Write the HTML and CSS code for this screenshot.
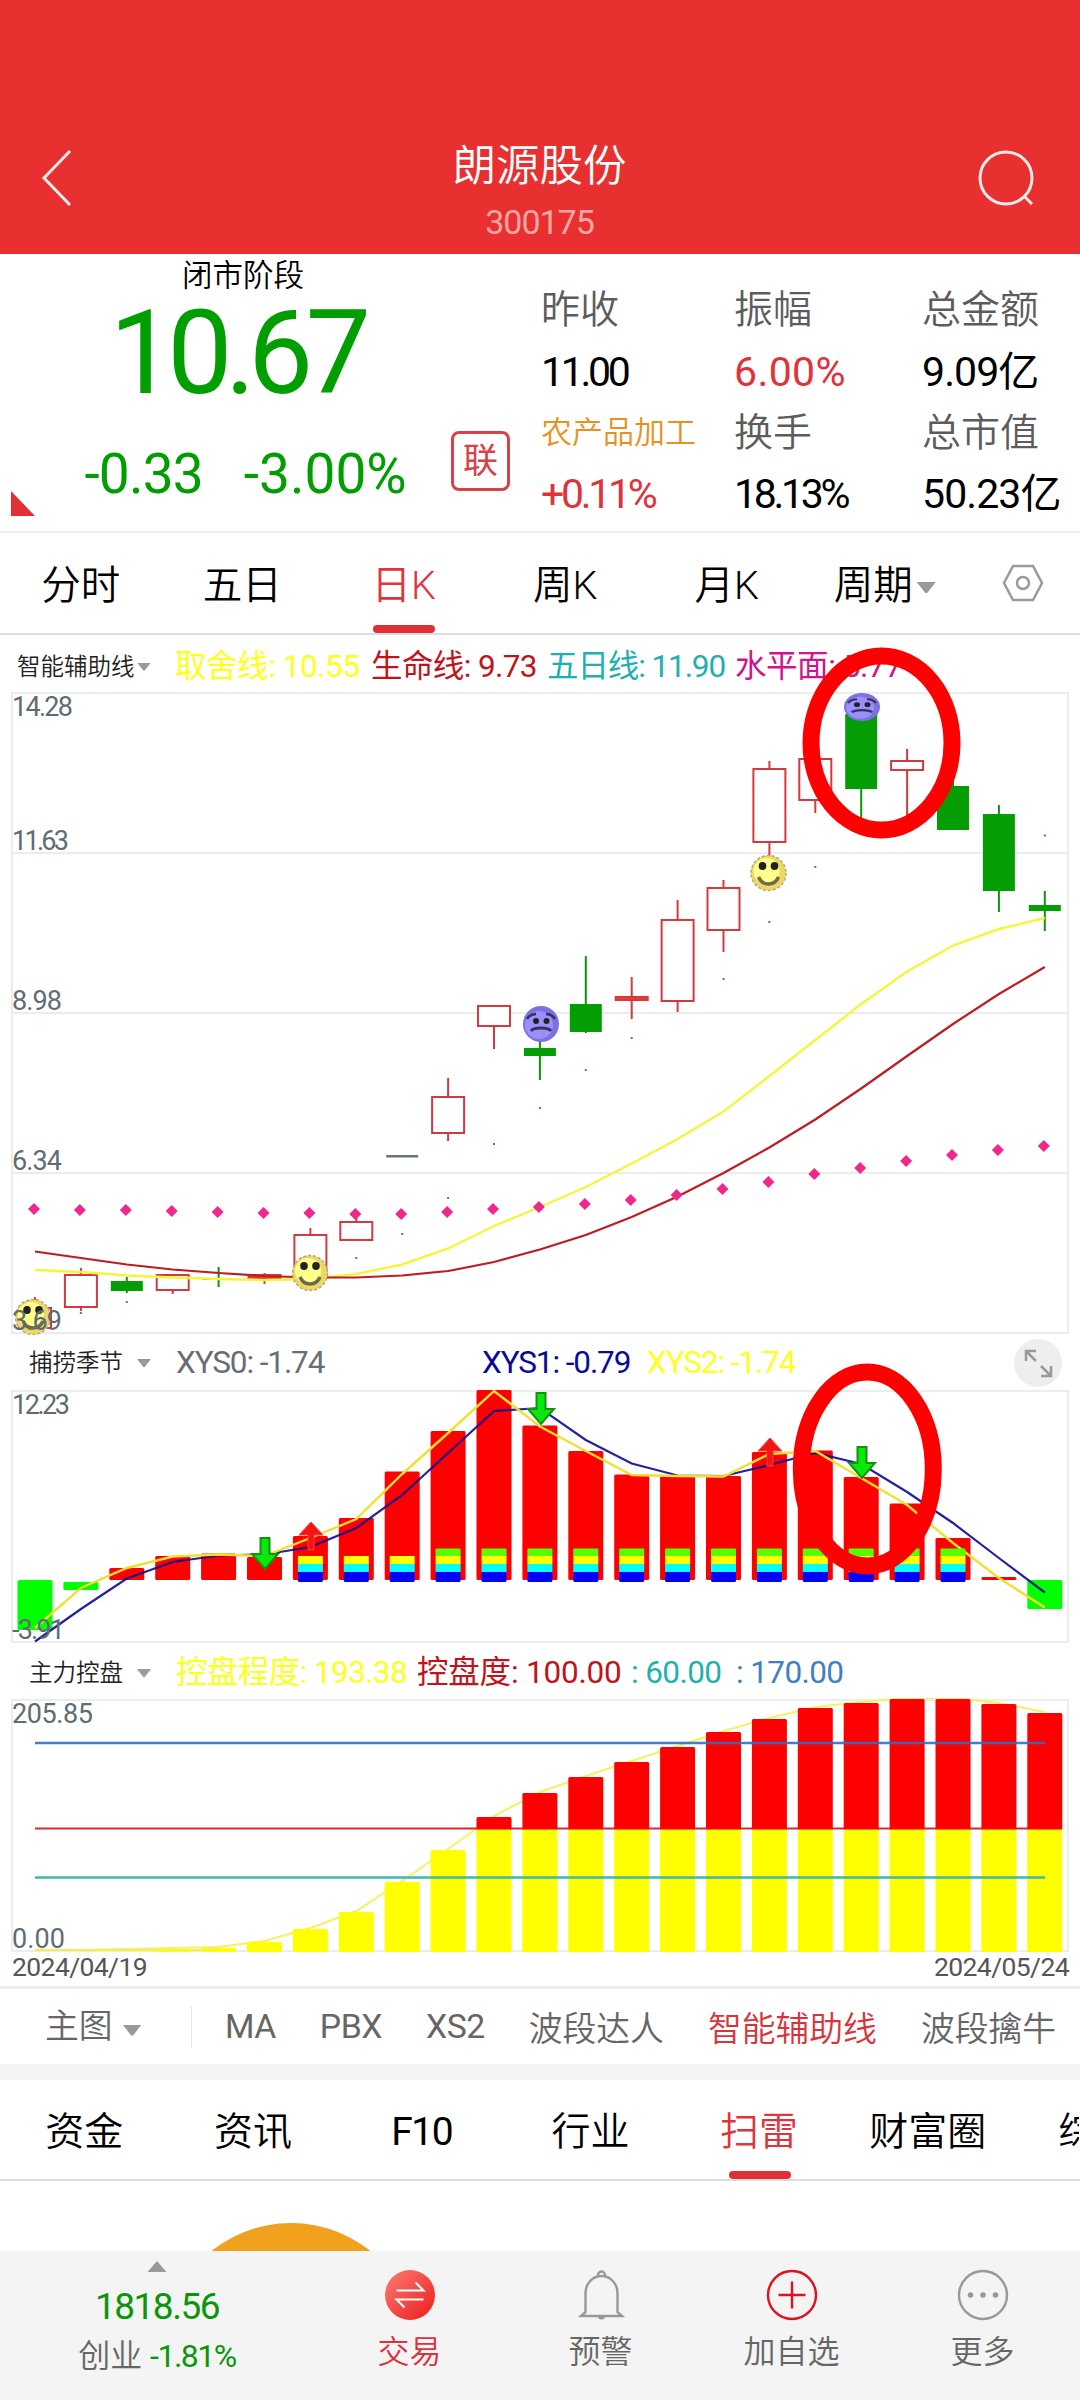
FILE: index.html
```
<!DOCTYPE html>
<html lang="zh-CN">
<head>
    <meta charset="UTF-8">
    <meta name="viewport" content="width=device-width, initial-scale=1.0">
    <title>朗源股份 300175</title>
    <link rel="stylesheet" href="styles.css">
</head>
<body>

<header class="topbar">
    <svg class="back-icon" viewBox="0 0 32 60" width="32" height="60"><path d="M29 3 L3 30 L29 57"/></svg>
    <div class="stock-title">
        <h1>朗源股份</h1>
        <p>300175</p>
    </div>
    <svg class="search-icon" viewBox="0 0 60 60" width="60" height="60"><circle cx="29" cy="30" r="26"/><path d="M47 48 L55 56"/></svg>
</header>

<section class="quote">
    <div class="price-box">
        <div class="stage">闭市阶段</div>
        <div class="price">10.67</div>
        <div class="change"><span>-0.33</span><span class="change-rate">-3.00%</span></div>
    </div>
    <div class="tag-box"><span class="tag">联</span></div>
    <div class="stats">
        <span class="label">昨收</span><span class="label">振幅</span><span class="label">总金额</span>
        <span class="value tight">11.00</span><span class="value red loose">6.00%</span><span class="value">9.09亿</span>
        <span class="label industry">农产品加工</span><span class="label">换手</span><span class="label">总市值</span>
        <span class="value red tight">+0.11%</span><span class="value tight">18.13%</span><span class="value">50.23亿</span>
    </div>
    <svg class="corner" viewBox="0 0 24 25" width="24" height="25"><path d="M0 0 V25 H24 Z"/></svg>
</section>

<nav class="period-tabs">
    <span>分时</span>
    <span>五日</span>
    <span class="active">日K</span>
    <span>周K</span>
    <span>月K</span>
    <span class="more">周期<i class="caret"></i></span>
    <svg class="setting-icon" viewBox="0 0 42 38" width="42" height="38"><path d="M11 2 H31 L40 19 L31 36 H11 L2 19 Z"/><circle cx="21" cy="19" r="6"/></svg>
</nav>

<section class="charts">
    <div class="indicator-bar main-bar">
        <span class="indicator-name">智能辅助线<i class="caret small"></i></span>
        <span class="yellow w-a">取舍线: 10.55</span>
        <span class="darkred w-b">生命线: 9.73</span>
        <span class="teal w-c">五日线: 11.90</span>
        <span class="magenta">水平面: 5.77</span>
    </div>
    <svg id="main-chart" class="chart" viewBox="0 690 1080 645" width="1080" height="645"></svg>

    <div class="indicator-bar">
        <span class="indicator-name">捕捞季节<i class="caret small"></i></span>
        <span class="gray w-d">XYS0: -1.74</span>
        <span class="blue w-e">XYS1: -0.79</span>
        <span class="yellow w-f">XYS2: -1.74</span>
        <span class="expand"><svg viewBox="0 0 48 48" width="48" height="48"><path d="M22 22 L13 13 M12 22 V12 H22 M27 27 L36 36 M37 27 V37 H27"/></svg></span>
    </div>
    <svg id="season-chart" class="chart" viewBox="0 1389 1080 256" width="1080" height="256"></svg>

    <div class="indicator-bar control-bar">
        <span class="indicator-name">主力控盘<i class="caret small"></i></span>
        <span class="yellow w-g">控盘程度: 193.38</span>
        <span class="darkred w-h">控盘度: 100.00</span>
        <span class="teal w-i">: 60.00</span>
        <span class="steel">: 170.00</span>
    </div>
    <svg id="control-chart" class="chart" viewBox="0 1698 1080 256" width="1080" height="256"></svg>
    <div class="dates"><span>2024/04/19</span><span>2024/05/24</span></div>

    <!-- hand drawn marks over the charts -->
    <svg class="marks" viewBox="0 635 1080 960" width="1080" height="960">
        <ellipse cx="881.5" cy="743" rx="70.5" ry="87"/>
        <ellipse cx="867.3" cy="1469" rx="66" ry="97"/>
    </svg>
</section>

<nav class="indicator-tabs">
    <span class="main-select">主图<i class="caret"></i></span>
    <span class="latin">MA</span>
    <span class="latin">PBX</span>
    <span class="latin">XS2</span>
    <span>波段达人</span>
    <span class="active">智能辅助线</span>
    <span>波段擒牛</span>
</nav>

<nav class="info-tabs">
    <span>资金</span>
    <span>资讯</span>
    <span class="latin">F10</span>
    <span>行业</span>
    <span class="active">扫雷</span>
    <span>财富圈</span>
    <span class="cut">综合</span>
</nav>

<section class="content">
    <div class="gauge"></div>
</section>

<footer class="toolbar">
    <div class="index-box">
        <svg viewBox="0 0 20 12" width="20" height="12"><path d="M10 0 L19.500 11 H.5 Z"/></svg>
        <div class="index-value">1818.56</div>
        <div class="index-name">创业 <span>-1.81%</span></div>
    </div>
    <div class="tool active">
        <svg viewBox="0 0 52 52" width="52" height="52">
            <defs><linearGradient id="trade" x1="0" y1="0" x2="1" y2="1"><stop offset="0" stop-color="#fb7b76"/><stop offset="1" stop-color="#ec1c1c"/></linearGradient></defs>
            <circle cx="26" cy="26" r="25" fill="url(#trade)"/>
            <path d="M12.500 21.500 H39.500 L31.500 13.500 M39.500 30.500 H12.500 L20.500 38.500" fill="none" stroke="#fff" stroke-width="2"/>
        </svg>
        <span>交易</span>
    </div>
    <div class="tool">
        <svg class="line" viewBox="0 0 52 52" width="52" height="52"><path d="M6 47 L10.500 43 V24 A16 17 0 0 1 42.500 24 V43 L47 47 Z M23 8 V6 A3.500 3.500 0 0 1 30 6 V8 M24 48 A3 3 0 0 0 29 48"/></svg>
        <span>预警</span>
    </div>
    <div class="tool">
        <svg class="line add" viewBox="0 0 52 52" width="52" height="52"><circle cx="26" cy="26" r="24"/><path d="M26 12.500 V39.500 M12.500 26 H39.500"/></svg>
        <span>加自选</span>
    </div>
    <div class="tool">
        <svg class="line" viewBox="0 0 52 52" width="52" height="52"><circle cx="26" cy="26" r="24"/><g class="dots"><circle cx="13.500" cy="26" r="2.800"/><circle cx="26" cy="26" r="2.800"/><circle cx="38.500" cy="26" r="2.800"/></g></svg>
        <span>更多</span>
    </div>
</footer>

<script src="charts.js"></script>
</body>
</html>
```
FILE: styles.css
```
* {
    box-sizing: border-box;
}
body {
    margin: 0;
    width: 1080px;
    height: 2400px;
    overflow: hidden;
    background: #fff;
    color: #000;
    font-family: Roboto, "Noto Sans CJK SC", sans-serif;
    font-weight: 360;
    white-space: nowrap;
}
h1, p {
    margin: 0;
    font-weight: 360;
}
i {
    font-style: normal;
}
.latin {
    font-weight: 400;
}
.red {
    color: #e0323a;
}
.darkred {
    color: #c0141a;
}
.yellow {
    color: #ffff1e;
}
.teal {
    color: #1fb0b0;
}
.magenta {
    color: #d0148c;
}
.gray {
    color: #666e76;
}
.blue {
    color: #0a0a9a;
}
.steel {
    color: #3f80c4;
}

/* top bar */
.topbar {
    height: 254px;
    padding: 138px 43px 0 41px;
    background: #e93030;
    display: flex;
    justify-content: space-between;
}
.back-icon, .search-icon {
    margin-top: 10px;
    fill: none;
    stroke: #fff;
    stroke-width: 3;
    opacity: 0.9;
}
.stock-title {
    color: #fff;
    text-align: center;
    margin-left: 29px;
    padding-top: 2px;
}
.stock-title h1 {
    font-size: 43.500px;
    line-height: 54px;
}
.stock-title p {
    font-size: 34px;
    font-weight: 400;
    line-height: 57px;
    letter-spacing: -1px;
    color: #f8a6a4;
}

/* quote */
.quote {
    position: relative;
    height: 279px;
    border-bottom: 2px solid #ececec;
    display: flex;
}
.price-box {
    width: 451px;
    text-align: center;
    color: #009e00;
}
.stage {
    width: 486px;
    font-size: 30.500px;
    line-height: 44px;
    color: #000;
}
.price {
    width: 473px;
    font-size: 116px;
    font-weight: 400;
    line-height: 111px;
    letter-spacing: -7.500px;
}
.change {
    display: flex;
    justify-content: center;
    gap: 41px;
    padding-left: 40px;
    font-size: 55px;
    font-weight: 400;
    line-height: 130px;
    letter-spacing: -0.800px;
}
.change-rate {
    letter-spacing: 0;
}
.tag-box {
    width: 90px;
    padding-top: 177px;
}
.tag {
    display: block;
    width: 59px;
    height: 60px;
    border: 3px solid #d8404a;
    border-radius: 8px;
    font-size: 35px;
    font-weight: 400;
    line-height: 56px;
    text-align: center;
    color: #d8404a;
}
.stats {
    display: grid;
    grid-template-columns: 193px 188px 158px;
    grid-template-rows: 62px 61px 61px 62px;
    padding-top: 26px;
    align-content: start;
    line-height: 61px;
}
.label {
    font-size: 39px;
    color: #5c5c5c;
}
.industry {
    font-size: 31px;
    line-height: 59px;
    color: #ea9020;
}
.value {
    font-size: 41px;
    font-weight: 400;
    letter-spacing: -0.900px;
}
.value.tight {
    letter-spacing: -3.300px;
}
.value.loose {
    letter-spacing: 0.400px;
}
.corner {
    position: absolute;
    left: 11px;
    top: 237px;
    fill: #e03035;
}

/* period tabs */
.period-tabs {
    height: 102px;
    border-bottom: 2px solid #dcdfdf;
    display: flex;
    align-items: center;
    padding-right: 36px;
    font-size: 39.500px;
}
.period-tabs span {
    width: 161.500px;
    height: 100px;
    line-height: 105px;
    text-align: center;
}
.period-tabs .more {
    padding-right: 7px;
}
.active {
    color: #e0343c;
}
.period-tabs .active {
    position: relative;
}
.period-tabs .active::after, .info-tabs .active::after {
    content: "";
    position: absolute;
    left: 50%;
    bottom: 0;
    width: 62px;
    height: 8px;
    margin-left: -31px;
    border-radius: 4px;
    background: #e03035;
}
.info-tabs .active::after {
    margin-left: -30px;
}
.setting-icon {
    margin-left: 33px;
    fill: none;
    stroke: #9a9a9a;
    stroke-width: 2.500;
}
.caret {
    display: inline-block;
    width: 19px;
    height: 11px;
    margin-left: 4px;
    vertical-align: 6px;
    background: #999;
    clip-path: polygon(0 0, 100% 0, 55% 100%, 45% 100%);
}
.caret.small {
    width: 14px;
    height: 8px;
    margin-left: auto;
}

/* charts */
.charts {
    position: relative;
    height: 1354px;
    border-bottom: 3px solid #ececec;
}
.indicator-bar {
    height: 54px;
    padding-left: 29px;
    padding-top: 2px;
    display: flex;
    align-items: center;
    font-size: 31.500px;
    font-weight: 400;
    line-height: 48px;
    letter-spacing: -1.100px;
}
.main-bar {
    height: 55px;
    padding-left: 17px;
    padding-top: 8px;
    letter-spacing: -0.450px;
}
.control-bar {
    height: 53px;
    padding-top: 3px;
    letter-spacing: -0.600px;
}
.indicator-name {
    display: flex;
    align-items: center;
    width: 122px;
    margin-right: 25px;
    font-size: 23.500px;
    font-weight: 360;
    letter-spacing: 0;
    color: #222;
}
.main-bar .indicator-name {
    width: 134px;
    margin-right: 24px;
}
.w-a {
    width: 196px;
}
.w-b {
    width: 176px;
    letter-spacing: -0.600px;
}
.w-c {
    width: 188px;
    letter-spacing: -1.100px;
}
.w-d {
    width: 306px;
}
.w-e {
    width: 165px;
}
.w-f {
    width: 367px;
}
.w-g {
    width: 241px;
}
.w-h {
    width: 214px;
    letter-spacing: -0.200px;
}
.w-i {
    width: 105px;
}
.expand {
    width: 48px;
    height: 48px;
    border-radius: 50%;
    background: #eee;
    fill: none;
    stroke: #999;
    stroke-width: 2.500;
}
.chart {
    display: block;
}
.axis {
    font-size: 27px;
    font-weight: 400;
    fill: #5f6c73;
}
.dates {
    display: flex;
    justify-content: space-between;
    padding: 0 11px 0 12px;
    font-size: 26.500px;
    font-weight: 400;
    line-height: 25px;
    letter-spacing: -0.600px;
    color: #555;
}
.marks {
    position: absolute;
    left: 0;
    top: 0;
    fill: none;
    stroke: #fe0000;
    stroke-width: 17;
}

/* indicator tabs */
.indicator-tabs {
    height: 91px;
    border-bottom: 16px solid #f3f3f3;
    padding-left: 45px;
    display: flex;
    align-items: center;
    gap: 44px;
    font-size: 33.800px;
    color: #666;
}
.indicator-tabs .active {
    color: #d8343c;
}
.indicator-tabs .latin {
    letter-spacing: -0.500px;
}
.main-select {
    width: 147px;
    line-height: 42px;
    margin-right: -11px;
    border-right: 1px solid #e4e4e4;
}
.main-select .caret {
    margin-left: 10px;
    vertical-align: 2px;
}

/* info tabs */
.info-tabs {
    height: 101px;
    border-bottom: 2px solid #dedede;
    display: flex;
    overflow: hidden;
    font-size: 39px;
    line-height: 104px;
}
.info-tabs span {
    width: 168.700px;
    text-align: center;
    flex-shrink: 0;
}
.info-tabs .latin {
    letter-spacing: -1.500px;
}
.info-tabs .active {
    position: relative;
}
.info-tabs .cut {
    width: 67px;
    padding-left: 46px;
    text-align: left;
    overflow: hidden;
}
.content {
    height: 70px;
    overflow: hidden;
}
.gauge {
    width: 254px;
    height: 254px;
    margin: 42px 0 0 164px;
    border-radius: 50%;
    background: #f2a11e;
}

/* bottom toolbar */
.toolbar {
    height: 150px;
    background: #f4f4f4;
    display: flex;
}
.index-box {
    width: 314px;
    padding-top: 10px;
    text-align: center;
    color: #0a960a;
    fill: #999;
}
.index-box svg {
    display: block;
    margin: 0 auto;
}
.index-value {
    font-size: 37px;
    font-weight: 400;
    line-height: 68px;
    letter-spacing: -1.500px;
}
.index-name {
    font-size: 32px;
    line-height: 30px;
    color: #666;
}
.index-name span {
    color: #0a960a;
    font-weight: 400;
    letter-spacing: -1.500px;
}
.tool {
    width: 191px;
    padding-top: 18px;
    text-align: center;
    font-size: 32px;
    line-height: 63px;
    color: #666;
}
.tool.active {
    color: #d8343c;
}
.tool svg {
    display: block;
    margin: 0 auto;
}
.tool svg.line {
    fill: none;
    stroke: #999;
    stroke-width: 2.400;
}
.tool svg.add {
    stroke: #e0101c;
}
.tool .dots {
    fill: #999;
    stroke: none;
}
```
FILE: charts.js
```
const STEP = 45.9;
const x = i => 35 + STEP * i;

// kind, body top, body bottom, high, low
const candles = [
    ['r', 1308, 1328, 1297, 1328],
    ['r', 1275, 1307, 1268, 1311],
    ['g', 1281, 1291, 1277, 1293],
    ['r', 1275, 1290, 1274, 1294],
    ['g', 1279, 1280, 1267, 1287],
    ['r', 1275, 1278, 1273, 1284],
    ['r', 1235, 1276, 1228, 1280],
    ['r', 1222, 1240, 1217, 1240],
    ['n', 1155, 1157, 1155, 1157],
    ['r', 1097, 1133, 1078, 1141],
    ['r', 1006, 1026, 1006, 1049],
    ['g', 1048, 1056, 1035, 1080],
    ['g', 1004, 1032, 956, 1033],
    ['r', 997, 1000, 977, 1019],
    ['r', 920, 1001, 900, 1012],
    ['r', 888, 930, 880, 952],
    ['r', 769, 842, 761, 856],
    ['r', 759, 800, 758, 813],
    ['g', 714, 789, 712, 822],
    ['r', 761, 770, 749, 818],
    ['g', 786, 830, 780, 830],
    ['g', 814, 891, 805, 912],
    ['g', 905, 911, 891, 931]
];
const trendLine = [1270, 1272, 1275.5, 1277.5, 1279, 1280, 1279, 1274, 1264.5, 1248.5, 1226, 1207, 1187, 1163.5, 1139, 1111.5, 1076, 1040, 1004, 971.5, 945.5, 929, 918];
const lifeLine = [1251.5, 1258, 1264.5, 1269.5, 1273, 1276, 1277.5, 1277.5, 1275.5, 1271, 1262, 1249.5, 1235, 1217, 1196.5, 1173, 1147.5, 1119.5, 1088.5, 1056, 1024, 994, 967];
const level = [1209, 1210, 1210, 1211, 1212, 1213, 1213, 1214, 1214, 1212, 1209, 1207, 1204, 1200, 1195, 1189, 1182, 1174, 1168, 1161, 1155, 1150, 1146];
const fiveDay = { 1: 1313, 2: 1302, 7: 1258, 8: 1234, 9: 1198, 10: 1144, 11: 1108, 12: 1070, 13: 1038, 15: 979, 16: 922, 17: 867, 22: 835.5 };

const season = [1630, 1590, 1568, 1556, 1553.5, 1557, 1536, 1518, 1471.5, 1431, 1390, 1425.5, 1451, 1474.5, 1476, 1476, 1452, 1450.5, 1477, 1503.5, 1538, 1577, 1609];
const xys2 = [1628, 1588, 1568, 1556.5, 1554.5, 1556, 1538, 1519, 1474, 1433, 1391, 1426.5, 1451, 1475, 1476, 1476.5, 1454, 1451, 1478, 1505, 1543, 1578, 1607.5];
const xys1 = [1641.5, 1609, 1578.5, 1562, 1555.5, 1554.5, 1547, 1528, 1495, 1453, 1411, 1408, 1440, 1463.5, 1475.5, 1476, 1465, 1453, 1464, 1492, 1523, 1558, 1592.5];

const control = [1951, 1951, 1950, 1949, 1948, 1942, 1929, 1912, 1882, 1850, 1817, 1793, 1777, 1762, 1747, 1732, 1719, 1708, 1703, 1699, 1699, 1704, 1713];

const line = (ys, color, w = 2) =>
    `<polyline points="${ys.map((y, i) => `${x(i)},${y}`).join(' ')}" fill="none" stroke="${color}" stroke-width="${w}"/>`;
const rect = (l, t, w, h, color, r = 0) =>
    `<rect x="${l}" y="${t}" width="${w}" height="${h}" rx="${r}" fill="${color}"/>`;
const seg = (x1, y1, x2, y2, color, w = 2) =>
    `<path d="M${x1} ${y1} L${x2} ${y2}" stroke="${color}" stroke-width="${w}"/>`;
const label = (text, y, w) =>
    `<text class="axis" x="12" y="${y}" textLength="${w}">${text}</text>`;
const frame = (t, h) =>
    `<rect x="12" y="${t}" width="1056" height="${h}" fill="none" stroke="#ececec" stroke-width="2"/>`;

function smile(cx, cy) {
    return `<g transform="translate(${cx} ${cy})">
        <circle r="17.5" fill="#ecd964" stroke="#b8a878" stroke-width="1.500" stroke-dasharray="3 2"/>
        <circle cx="-2" cy="-2" r="13" fill="#ffff8c"/>
        <ellipse cx="-6" cy="-7" rx="3.8" ry="4" fill="#222"/><ellipse cx="6" cy="-7" rx="3.8" ry="4" fill="#222"/>
        <path d="M-10 4 Q-7 11 0 11 Q7 11 10 4" fill="none" stroke="#6b6a50" stroke-width="3.500"/></g>`;
}

function sad(cx, cy, sy = 1) {
    return `<g transform="translate(${cx} ${cy}) scale(1 ${sy})">
        <circle r="18" fill="#7c70e6"/><circle cx="-2" cy="1" r="14" fill="#9a90fa"/>
        <path d="M-14 -5 Q-11 -10 -5 -10 M14 -5 Q11 -10 5 -10" fill="none" stroke="#3a3060" stroke-width="2.500"/>
        <circle cx="-5" cy="-3" r="3" fill="#222"/><circle cx="5.5" cy="-3" r="3" fill="#222"/>
        <path d="M-10 7 Q-8 4 0 4 Q8 4 10 7" fill="none" stroke="#3a3060" stroke-width="3"/></g>`;
}

const arrowDown = (cx, t) =>
    `<path d="M${cx - 4.5} ${t} h9 v16 h8.500 l-13 15 l-13 -15 h8.500 z" fill="#0be80b" stroke="#129412" stroke-width="2"/>`;
const arrowUp = (cx, t) =>
    `<path d="M${cx} ${t} l12 13 h-9 v15 h-6 v-15 h-9 z" fill="#f51414" stroke="#ff3c3c" stroke-width="1"/>`;

function drawMain() {
    let s = frame(693, 640);
    [853, 1013, 1173].forEach(y => s += seg(12, y, 1068, y, '#ececec'));
    candles.forEach(([kind, top, bottom, high, low], i) => {
        const c = x(i);
        if (kind === 'r') {
            s += seg(c, high, c, top, '#d23a3e') + seg(c, bottom, c, low, '#d23a3e');
            s += `<rect x="${c - 16}" y="${top}" width="32" height="${bottom - top}" fill="${bottom - top < 5 ? '#f33' : '#fff'}" stroke="#d23a3e" stroke-width="2"/>`;
        } else if (kind === 'g') {
            s += seg(c, high, c, low, '#0a960a') + rect(c - 16, top, 32, bottom - top, '#049e04');
        } else {
            s += rect(c - 16, top, 32, 2.5, '#68757c');
        }
    });
    for (const i in fiveDay) s += rect(x(+i) - 1, fiveDay[i] - 1, 2, 2, '#3a8a78');
    s += line(trendLine, '#f5f53c', 2.4) + line(lifeLine, '#be1c20', 2.2);
    level.forEach((y, i) => s += `<path d="M${x(i) - 1} ${y - 6} l6 6 l-6 6 l-6 -6 z" fill="#f0288c"/>`);
    s += smile(33, 1317) + smile(310, 1273) + smile(768.500, 873) + sad(541, 1024) + sad(862, 707, 0.78);
    s += label('14.28', 716, 61) + label('11.63', 850, 57) + label('8.98', 1010, 50) + label('6.34', 1170, 50) + label('3.69', 1330, 50);
    document.getElementById('main-chart').innerHTML = s;
}

function drawSeason() {
    let s = frame(1391, 251);
    season.forEach((y, i) => {
        const l = x(i) - 17.5;
        if (y > 1580) {
            s += rect(l, i === 1 ? 1582 : 1580, 35, y - (i === 1 ? 1582 : 1580), '#0f0', 1.5);
        } else {
            s += rect(l, y, 35, 1580 - y, '#fe0000', 1.5);
        }
    });
    s += line(xys1, 'rgba(10, 10, 150, 0.9)', 2.2) + line(xys2, '#f2e030', 2.4);
    for (let i = 6; i <= 20; i++) {
        const l = x(i) - 12.5;
        if (i > 8) s += rect(l, 1548.5, 25, 8, '#5f0', 1);
        s += rect(l, 1556, 25, 8, '#ff0') + rect(l, 1564, 25, 8, '#0ff') + rect(l, 1572, 25, 10, '#00f', 1.5);
    }
    s += arrowDown(265, 1538) + arrowDown(541, 1393) + arrowDown(862, 1447) + arrowUp(311, 1522) + arrowUp(770, 1438);
    s += label('12.23', 1414, 58) + label('-3.91', 1639, 53);
    document.getElementById('season-chart').innerHTML = s;
}

function drawControl() {
    let s = frame(1700, 251);
    s += line(control.map(y => y - 1), '#f8f060', 2) + seg(35, 1828.5, 1045, 1828.5, '#d8282c', 2);
    control.forEach((y, i) => {
        const l = x(i) - 17.5;
        if (y < 1829) s += rect(l, y, 35, 1829 - y + 2, '#fe0000', 1.5);
        const t = Math.max(y, 1829.5);
        if (y < 1950) s += rect(l, t, 35, 1952 - t, '#ff0', y < 1829 ? 0 : 1.5);
    });
    s += seg(35, 1950, 219, 1950, '#f4f046', 2);
    s += seg(35, 1743, 1045, 1743, 'rgba(50, 110, 190, 0.9)', 2.5) + seg(35, 1877.500, 1045, 1877.500, '#3fb8a8', 2.5);
    s += label('205.85', 1723, 81) + label('0.00', 1948, 53);
    document.getElementById('control-chart').innerHTML = s;
}

drawMain();
drawSeason();
drawControl();
```
